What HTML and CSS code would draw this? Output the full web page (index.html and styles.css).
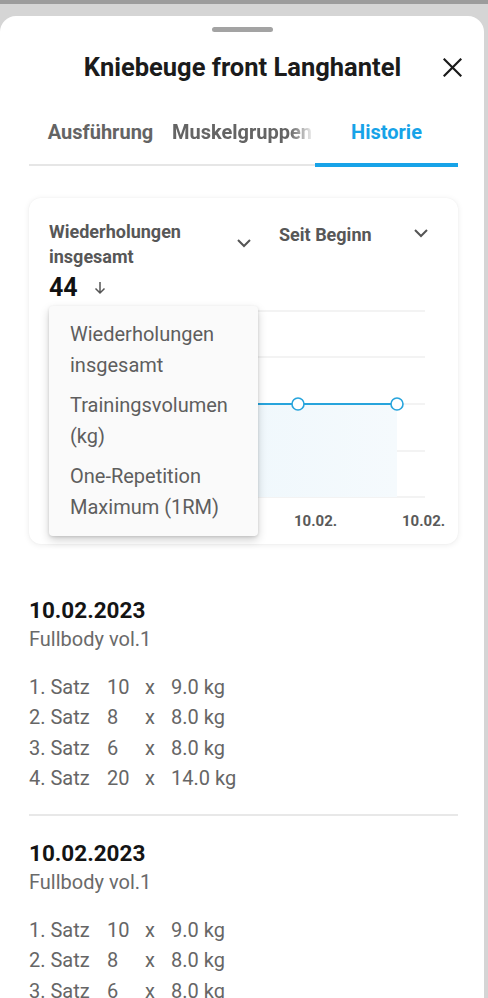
FILE: index.html
```html
<!DOCTYPE html>
<html lang="de">
<head>
<meta charset="utf-8">
<title>Kniebeuge front Langhantel</title>
<link rel="stylesheet" href="styles.css">
</head>
<body>
<div class="topbar"></div>
<div class="sheet">
  <div class="handle"></div>
  <header class="title-row">
    <h1 class="title">Kniebeuge front Langhantel</h1>
    <button class="close" aria-label="Schließen">
      <svg width="19" height="19" viewBox="0 0 19 19"><path d="M1.5 1.5 L17.5 17.5 M17.5 1.5 L1.5 17.5" stroke="#1a1a1a" stroke-width="2.2" stroke-linecap="square" fill="none"/></svg>
    </button>
  </header>
  <nav class="tabs">
    <div class="tab">Ausführung</div>
    <div class="tab tab-clip"><span>Muskelgruppen</span></div>
    <div class="tab active">Historie</div>
  </nav>

  <section class="card">
    <div class="card-head">
      <div class="select select-metric">
        <span class="select-label">Wiederholungen insgesamt</span>
        <svg class="chev chev-metric" width="16" height="10" viewBox="0 0 16 10"><path d="M2 2 L8 8 L14 2" stroke="#555" stroke-width="2" fill="none"/></svg>
      </div>
      <div class="select select-range">
        <span class="select-label">Seit Beginn</span>
        <svg class="chev" width="16" height="10" viewBox="0 0 16 10"><path d="M2 2 L8 8 L14 2" stroke="#555" stroke-width="2" fill="none"/></svg>
      </div>
    </div>
    <div class="value-row">
      <span class="value">44</span>
      <svg class="arrow" width="12" height="14" viewBox="0 0 12 14"><path d="M6 1 V12 M1.5 7.5 L6 12 L10.5 7.5" stroke="#555" stroke-width="1.5" fill="none"/></svg>
    </div>
    <svg class="chart" width="396" height="230" viewBox="0 0 396 230">
      <defs>
        <linearGradient id="fill" x1="0" y1="0" x2="1" y2="0">
          <stop offset="0" stop-color="#e9f5fb"/>
          <stop offset="1" stop-color="#f5fafd"/>
        </linearGradient>
      </defs>
      <g stroke="#e8e8e8" stroke-width="1.2">
        <line x1="0" y1="7" x2="376" y2="7"/>
        <line x1="0" y1="53" x2="376" y2="53"/>
        <line x1="0" y1="100" x2="376" y2="100"/>
        <line x1="0" y1="147" x2="376" y2="147"/>
        <line x1="0" y1="193" x2="376" y2="193"/>
      </g>
      <rect x="0" y="100" width="348" height="93" fill="url(#fill)"/>
      <line x1="0" y1="100" x2="348" y2="100" stroke="#27a4dc" stroke-width="2"/>
      <circle cx="249" cy="100" r="6" fill="#fff" stroke="#27a4dc" stroke-width="1.6"/>
      <circle cx="348" cy="100" r="6" fill="#fff" stroke="#27a4dc" stroke-width="1.6"/>
      <text x="245" y="222" class="axis">10.02.</text>
      <text x="353" y="222" class="axis">10.02.</text>
    </svg>

    <ul class="menu">
      <li>Wiederholungen insgesamt</li>
      <li>Trainingsvolumen (kg)</li>
      <li>One-Repetition Maximum (1RM)</li>
    </ul>
  </section>

  <section class="entries">
    <article class="entry">
      <h2 class="date">10.02.2023</h2>
      <p class="workout">Fullbody vol.1</p>
      <div class="sets">
        <span>1. Satz</span><span>10</span><span>x</span><span>9.0 kg</span>
        <span>2. Satz</span><span>8</span><span>x</span><span>8.0 kg</span>
        <span>3. Satz</span><span>6</span><span>x</span><span>8.0 kg</span>
        <span>4. Satz</span><span>20</span><span>x</span><span>14.0 kg</span>
      </div>
    </article>
    <article class="entry">
      <h2 class="date">10.02.2023</h2>
      <p class="workout">Fullbody vol.1</p>
      <div class="sets">
        <span>1. Satz</span><span>10</span><span>x</span><span>9.0 kg</span>
        <span>2. Satz</span><span>8</span><span>x</span><span>8.0 kg</span>
        <span>3. Satz</span><span>6</span><span>x</span><span>8.0 kg</span>
        <span>4. Satz</span><span>20</span><span>x</span><span>14.0 kg</span>
      </div>
    </article>
  </section>
</div>
</body>
</html>
```

FILE: styles.css
```css
* { box-sizing: border-box; }
html, body { margin: 0; padding: 0; }
body {
  background: #d5d5d5;
  font-family: Roboto, "Noto Sans", "Liberation Sans", sans-serif;
  height: 998px;
  overflow: hidden;
}
.topbar {
  height: 4px;
  background: #9c9c9c;
}
.sheet {
  margin-top: 12px;
  margin-right: 4px;
  background: #fff;
  border-radius: 16px 16px 0 0;
  min-height: 990px;
  padding: 0 26px 0 29px;
}
.handle {
  width: 61px;
  height: 5px;
  position: relative;
  top: 11px;
  border-radius: 3px;
  background: #a3a3a3;
  margin-left: 183px;
}
.title-row {
  display: flex;
  align-items: center;
  justify-content: center;
  height: 50px;
  margin-top: 21px;
  position: relative;
}
.title {
  margin: 0;
  font-size: 25.5px;
  font-weight: 700;
  color: #1b1b1b;
  letter-spacing: 0;
  position: relative;
  left: -1px;
}
.close {
  position: absolute;
  right: -4px;
  top: 16px;
  background: none;
  border: 0;
  padding: 0;
  width: 19px;
  height: 19px;
}
.tabs {
  display: grid;
  grid-template-columns: repeat(3, 1fr);
  margin-top: 21px;
  border-bottom: 2px solid #e6e6e6;
  height: 53px;
}
.tab {
  font-size: 20px;
  font-weight: 700;
  color: #646464;
  text-align: center;
  padding-top: 6px;
  white-space: nowrap;
  overflow: hidden;
  line-height: 26px;
}
.tab-clip {
  text-align: left;
  -webkit-mask-image: linear-gradient(to right, #000 82%, transparent 100%);
  mask-image: linear-gradient(to right, #000 82%, transparent 100%);
}
.tab.active {
  color: #17a3e8;
  border-bottom: 4px solid #17a3e8;
  margin-bottom: -3px;
}
.card {
  position: relative;
  margin-top: 32px;
  background: #fff;
  border-radius: 12px;
  box-shadow: 0 1px 6px rgba(0,0,0,0.08), 0 0 2px rgba(0,0,0,0.04);
  padding: 21px 13px 0 20px;
  height: 346px;
}
.card-head {
  display: grid;
  grid-template-columns: 230px 1fr;
}
.select {
  display: flex;
  justify-content: space-between;
  font-size: 18px;
  font-weight: 700;
  color: #575757;
  line-height: 25px;
}
.select-metric .select-label { width: 160px; }
.chev-metric { margin-top: 19px; margin-right: 27px; }
.select-range { padding-right: 16px; padding-top: 3px; }
.select-range .chev { margin-top: 6px; }
.value-row {
  display: flex;
  align-items: center;
  gap: 16px;
  height: 30px;
  margin-top: 3px;
}
.value {
  font-size: 25px;
  font-weight: 700;
  color: #111;
}
.arrow { margin-top: 2px; }
.chart {
  display: block;
  margin-top: 2px;
}
.axis {
  font-family: Roboto, "Liberation Sans", sans-serif;
  font-size: 15px;
  font-weight: 700;
  fill: #5a5a5a;
}
.menu {
  position: absolute;
  left: 20px;
  top: 108px;
  width: 209px;
  margin: 0;
  padding: 13px 12px 13px 21px;
  list-style: none;
  background: #fafafa;
  border-radius: 4px;
  box-shadow: 0 4px 10px rgba(0,0,0,0.18), 0 1px 3px rgba(0,0,0,0.12);
}
.menu li {
  font-size: 20px;
  line-height: 31px;
  color: #5e5e5e;
  margin-bottom: 9px;
}
.menu li:last-child { margin-bottom: 0; }
.entries {
  margin-top: 51px;
}
.entry {
  padding-bottom: 21px;
}
.entry + .entry {
  border-top: 2px solid #e8e8e8;
  padding-top: 22px;
}
.date {
  margin: 0;
  font-size: 22.5px;
  font-weight: 700;
  color: #141414;
  line-height: 30px;
}
.workout {
  margin: 0;
  font-size: 20px;
  color: #6a6a6a;
  line-height: 29px;
}
.sets {
  margin-top: 18px;
  display: grid;
  grid-template-columns: 78px 38px 26px auto;
  font-size: 20px;
  color: #666;
  line-height: 30.3px;
}
```
